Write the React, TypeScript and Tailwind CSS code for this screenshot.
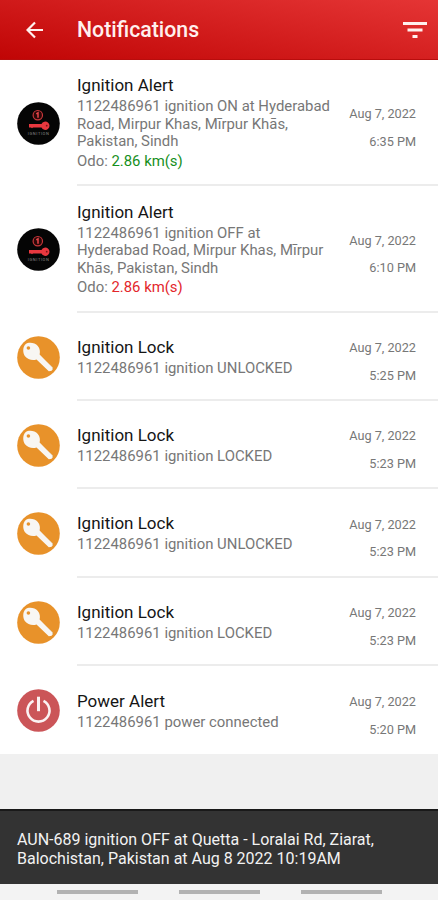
import type { ReactNode } from 'react';

type IconType = 'alert' | 'lock' | 'power';

interface Notification {
  id: number;
  icon: IconType;
  title: string;
  lines: string[];
  odo?: string;
  odoColor?: string;
  time: string;
  height: string;
}

const DATE = 'Aug 7, 2022';

const notifications: Notification[] = [
  {
    id: 1,
    icon: 'alert',
    title: 'Ignition Alert',
    lines: ['1122486961 ignition ON at Hyderabad', 'Road, Mirpur Khas, Mīrpur Khās,', 'Pakistan, Sindh'],
    odo: '2.86 km(s)',
    odoColor: 'text-[#168f1c]',
    time: '6:35 PM',
    height: 'h-[126px]',
  },
  {
    id: 2,
    icon: 'alert',
    title: 'Ignition Alert',
    lines: ['1122486961 ignition OFF at', 'Hyderabad Road, Mirpur Khas, Mīrpur', 'Khās, Pakistan, Sindh'],
    odo: '2.86 km(s)',
    odoColor: 'text-[#e3262b]',
    time: '6:10 PM',
    height: 'h-[127px]',
  },
  { id: 3, icon: 'lock', title: 'Ignition Lock', lines: ['1122486961 ignition UNLOCKED'], time: '5:25 PM', height: 'h-[88px]' },
  { id: 4, icon: 'lock', title: 'Ignition Lock', lines: ['1122486961 ignition LOCKED'], time: '5:23 PM', height: 'h-[88px]' },
  { id: 5, icon: 'lock', title: 'Ignition Lock', lines: ['1122486961 ignition UNLOCKED'], time: '5:23 PM', height: 'h-[89px]' },
  { id: 6, icon: 'lock', title: 'Ignition Lock', lines: ['1122486961 ignition LOCKED'], time: '5:23 PM', height: 'h-[88px]' },
  { id: 7, icon: 'power', title: 'Power Alert', lines: ['1122486961 power connected'], time: '5:20 PM', height: 'h-[88px]' },
];

const AlertIcon = () => (
  <svg className="size-[43px]" viewBox="0 0 43 43">
    <circle cx="21.5" cy="21.5" r="21.3" fill="#050505" />
    <circle cx="20.8" cy="13.2" r="4.7" fill="#2a0808" stroke="#c9373b" strokeWidth="1.2" />
    <path d="M19.3 11.8l1.7-1v5" fill="none" stroke="#e8464a" strokeWidth="1.5" />
    <path d="M12 22h12.5a4.2 4.2 0 1 1 0 3.4h-8.5l-1 .9-1-.9H12z" fill="#e8383f" />
    <circle cx="29.7" cy="23.7" r="0.9" fill="#7c1418" />
    <text x="21.3" y="33.4" fill="#8a8a8a" fontSize="4" textAnchor="middle" fontFamily="Roboto, sans-serif" textLength="21">
      IGNITION
    </text>
  </svg>
);

const LockIcon = () => (
  <svg className="size-[43px]" viewBox="0 0 43 43">
    <circle cx="21.5" cy="21.5" r="21.3" fill="#e8922a" />
    <path d="M23 19.5L36 31.5V34H32z" fill="#dcc7a6" />
    <path
      d="M8.500 8.200C12 5.800 18 6.800 20.800 10C23 12.600 23.300 15.800 22.600 18.400L35.200 31.500L34.800 34.700L31.800 35.200L19.500 23.500C15.500 24.800 10.500 23.600 8 20.300C5.800 17.200 5.400 11 8.500 8.200z"
      fill="#f8f6f3"
    />
    <circle cx="11.4" cy="12" r="1.8" fill="#e8922a" />
  </svg>
);

const PowerIcon = () => (
  <svg className="size-[43px]" viewBox="0 0 43 43">
    <circle cx="21.5" cy="21.5" r="21.3" fill="#cb5558" />
    <g fill="none" stroke="#fbf3f3" strokeWidth="2.6">
      <path d="M16.5 11.8a11 11 0 1 0 10 0" />
      <path d="M21.5 7.7v14.5" strokeWidth="3" />
    </g>
  </svg>
);

const icons: Record<IconType, ReactNode> = {
  alert: <AlertIcon />,
  lock: <LockIcon />,
  power: <PowerIcon />,
};

const NotificationRow = ({ item, last }: { item: Notification; last: boolean }) => (
  <div className={`flex pl-[17px] ${item.height}`}>
    <div className="flex w-[60px] shrink-0 items-center">{icons[item.icon]}</div>
    <div className={`flex flex-1 items-center ${last ? '' : 'border-b-2 border-[#ececec]'}`}>
      <div className="flex-1 whitespace-nowrap pt-px">
        <h2 className="text-[17px] leading-[22px] text-[#151515]">{item.title}</h2>
        <div className="pt-[2px] text-[14.9px] leading-[17.5px] text-[#777]">
          {item.lines.map((line) => (
            <p key={line}>{line}</p>
          ))}
        </div>
        {item.odo && (
          <p className="text-[14.9px] leading-[20px] text-[#777]">
            Odo: <span className={item.odoColor}>{item.odo}</span>
          </p>
        )}
      </div>
      <div className="shrink-0 pr-[22px] pt-[11px] text-right text-[12.7px] leading-[27.5px] text-[#777]">
        <p>{DATE}</p>
        <p>{item.time}</p>
      </div>
    </div>
  </div>
);

export default function App() {
  return (
    <div className="flex h-[900px] w-[438px] flex-col overflow-hidden bg-[#f0f0f0] font-[Roboto,sans-serif]">
      <header className="flex h-[60px] shrink-0 items-center border-b border-[#b80d0d] bg-linear-[190deg,#e53535,#c00505] pl-[26px] pr-[11px]">
        <svg className="h-[18px] w-[18px]" viewBox="0 0 18 18" fill="none" stroke="#fff0ee" strokeWidth="2.2">
          <path d="M17 9H2M9 1.5L1.5 9 9 16.5" />
        </svg>
        <h1 className="ml-[33px] flex-1 text-[21.3px] font-medium text-[#fff0ee]">Notifications</h1>
        <svg className="h-[18px] w-[24px]" viewBox="0 0 24 18" fill="#fff0ee">
          <path d="M0 1h24v3H0zM4.500 7.500h15v3h-15zM9.500 14h5v3h-5z" />
        </svg>
      </header>

      <main className="shrink-0 bg-white">
        {notifications.map((item, i) => (
          <NotificationRow key={item.id} item={item} last={i === notifications.length - 1} />
        ))}
      </main>

      <div className="mt-auto h-[75px] shrink-0 border-t-2 border-[#191919] bg-[#333] pl-[17px] pt-[19px] text-[16px] leading-[19px] text-[#f2f2f2]">
        <p>AUN-689 ignition OFF at Quetta - Loralai Rd, Ziarat,</p>
        <p>Balochistan, Pakistan at Aug 8 2022 10:19AM</p>
      </div>

      <nav className="flex h-4 shrink-0 justify-center gap-[41px] bg-[#f3f3f3] pt-[6px]">
        <span className="h-1 w-[81px] bg-[#b2b2b2]" />
        <span className="h-1 w-[81px] bg-[#b2b2b2]" />
        <span className="h-1 w-[81px] bg-[#b2b2b2]" />
      </nav>
    </div>
  );
}
